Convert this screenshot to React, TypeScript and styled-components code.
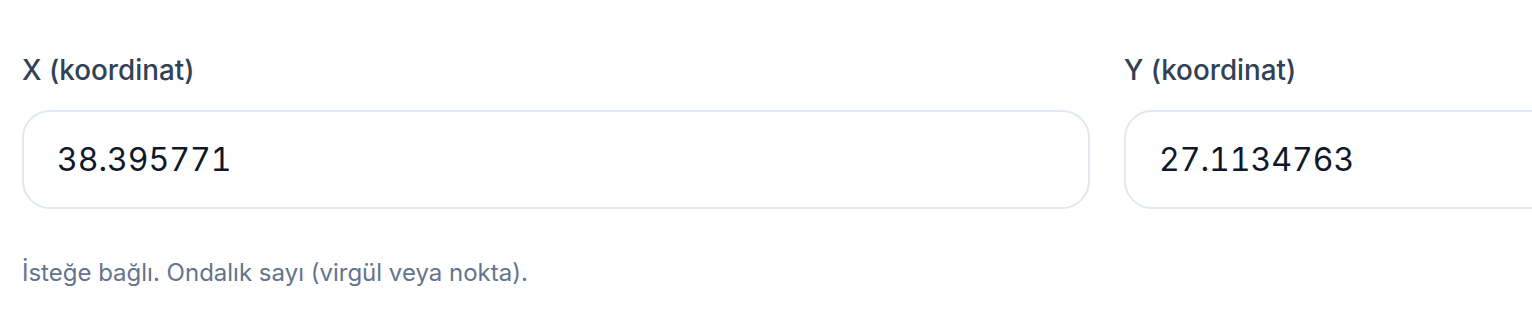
import React from "react";
import styled, { createGlobalStyle } from "styled-components";

const Global = createGlobalStyle`
  html, body { margin: 0; padding: 0; background: #ffffff; }
  body { font-family: Inter, "Noto Sans", sans-serif; overflow: hidden; }
`;

const Page = styled.div`
  width: 1532px;
  height: 310px;
  overflow: hidden;
  padding: 50px 0 0 22px;
  box-sizing: border-box;
`;

const Row = styled.div`
  display: grid;
  grid-template-columns: 1068px 1068px;
  column-gap: 34px;
`;

const Field = styled.div`
  display: flex;
  flex-direction: column;
`;

const Label = styled.label`
  font-size: 27.8px;
  line-height: 40px;
  font-weight: 500;
  color: #334155;
  margin-bottom: 20px;
`;

const Input = styled.input`
  box-sizing: border-box;
  height: 99px;
  width: 100%;
  border: 2px solid #e2e8f0;
  border-radius: 28px;
  padding: 0 33px;
  font-family: Inter, "Noto Sans", sans-serif;
  font-size: 32px;
  font-weight: 400;
  font-variant-numeric: tabular-nums;
  letter-spacing: 0;
  color: #0f172a;
  background: #ffffff;
  outline: none;
`;

const Help = styled.p`
  margin: 48px 0 0;
  font-size: 24px;
  line-height: 32px;
  color: #64748b;
`;

export default function App() {
  return (
    <>
      <Global />
      <Page>
        <Row>
          <Field>
            <Label>X (koordinat)</Label>
            <Input defaultValue="38.395771" />
            <Help>İsteğe bağlı. Ondalık sayı (virgül veya nokta).</Help>
          </Field>
          <Field>
            <Label>Y (koordinat)</Label>
            <Input defaultValue="27.1134763" />
          </Field>
        </Row>
      </Page>
    </>
  );
}
